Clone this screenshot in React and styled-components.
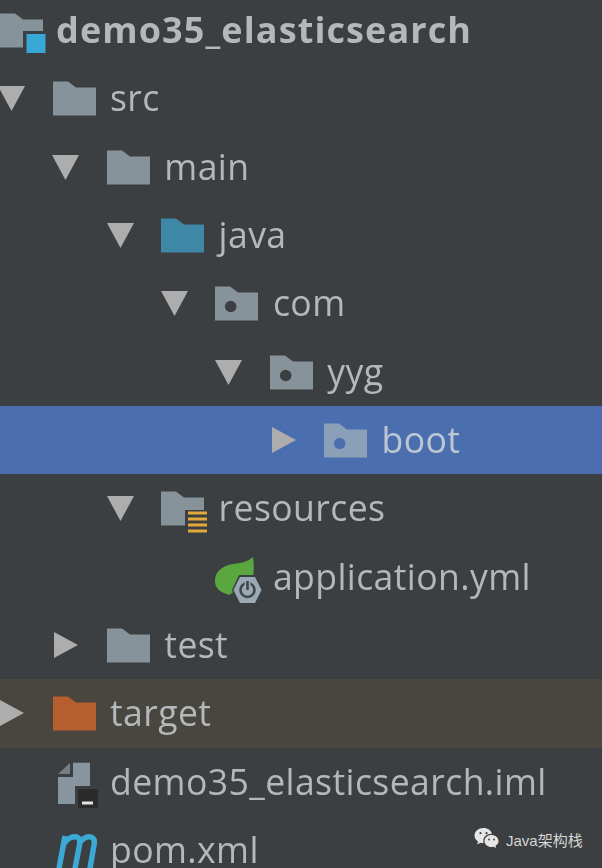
import React from 'react';
import styled, { createGlobalStyle } from 'styled-components';

const GlobalStyle = createGlobalStyle`
  html, body {
    margin: 0;
    padding: 0;
    background: #3c3f41;
  }
`;

const Page = styled.div`
  position: relative;
  width: 602px;
  height: 868px;
  overflow: hidden;
  background: #3c3f41;
`;

const Tree = styled.ul`
  list-style: none;
  margin: -4px 0 0;
  padding: 0;
  filter: blur(0.6px);
`;

const rowColors = {
  selected: '#4b6eaf',
  ignored: '#49453f',
  plain: 'transparent',
};

const Row = styled.li`
  display: flex;
  align-items: center;
  height: 68.33px;
  padding-left: ${(p) => p.$level * 54.3}px;
  background: ${(p) => rowColors[p.$tone || 'plain']};
`;

const ArrowSlot = styled.span`
  flex: none;
  display: flex;
  width: 54.5px;
  margin-left: -2px;
  svg {
    display: block;
  }
`;

const IconSlot = styled.span`
  flex: none;
  display: flex;
  width: 43px;
  height: 44px;
  margin-right: ${(p) => (p.$root ? 13 : 14.5)}px;
  svg {
    display: block;
    overflow: visible;
  }
`;

const Label = styled.span`
  font-family: 'Open Sans', 'Noto Sans', sans-serif;
  font-size: ${(p) => (p.$bold ? 36 : 35.6)}px;
  font-weight: ${(p) => (p.$bold ? 700 : 400)};
  letter-spacing: ${(p) => (p.$bold ? 1.1 : 0.4)}px;
  color: ${(p) => (p.$tone === 'selected' ? '#bcc6d4' : '#b4b8bb')};
  white-space: nowrap;
  line-height: 44px;
  margin-top: ${(p) => (p.$bold ? 0 : -2)}px;
`;

const Watermark = styled.div`
  position: absolute;
  left: 474px;
  top: 827px;
  display: flex;
  align-items: center;
  gap: 7px;
  font-family: 'Liberation Sans', 'Noto Sans CJK SC', sans-serif;
  font-size: 15px;
  color: #d6d6d6;
`;

function Arrow({ open }) {
  return (
    <svg width="27" height="44" viewBox="0 0 27 44">
      {open ? <path d="M0 10H27L13.5 35Z" fill="#adadad" /> : <path d="M2 9L26 22L2 35Z" fill="#adadad" />}
    </svg>
  );
}

function Folder({ color = '#87939a', hole, badge }) {
  return (
    <svg width="43" height="44" viewBox="0 0 43 44">
      <path d="M0 5.5H15L23 11.5H43V39.5H0Z" fill={color} />
      {hole && <circle cx="15.7" cy="25.5" r="5.8" fill={hole} />}
      {badge}
    </svg>
  );
}

function RootBadge() {
  return (
    <>
      <rect x="23" y="23" width="23" height="23" fill="#3c3f41" />
      <rect x="26.5" y="26" width="19" height="19" fill="#38a9d6" />
    </>
  );
}

function ResourceBadge() {
  return (
    <>
      <rect x="24" y="24" width="22" height="23" fill="#3c3f41" />
      <path d="M27 27H46M27 33H46M27 39H46M27 45H46" stroke="#e3a93d" strokeWidth="3.2" />
    </>
  );
}

function SpringIcon() {
  return (
    <svg width="43" height="44" viewBox="0 0 43 44">
      <path d="M38 2C33 6 28 8 22 8.5C10 9.5 0 15 0 26C0 32 4 36 9 38L14 40L38 24C39 16 39 8 38 2Z" fill="#5aa63f" />
      <path d="M24 20H41L48 35L41 50H24L17 35Z" fill="#3c3f41" />
      <path d="M25 22H40L46.5 35L40 48H25L18.5 35Z" fill="#9aa9b3" />
      <circle cx="32.5" cy="35" r="7" fill="none" stroke="#3f4649" strokeWidth="2.6" />
      <path d="M32.5 26V35" stroke="#9aa9b3" strokeWidth="6" />
      <path d="M32.5 26V35" stroke="#3f4649" strokeWidth="2.6" />
    </svg>
  );
}

function ImlIcon() {
  return (
    <svg width="43" height="44" viewBox="0 0 43 44">
      <path d="M20 2.7H37V44H5V17H20Z" fill="#87959e" />
      <path d="M5 14L17 3V14Z" fill="#87959e" opacity="0.75" />
      <rect x="22" y="26" width="26" height="25" fill="#3c3f41" />
      <rect x="25" y="29" width="20" height="19" rx="1" fill="#2b2b2b" />
      <rect x="29" y="41.5" width="11" height="3" fill="#e4e4e4" />
    </svg>
  );
}

function MavenIcon() {
  return (
    <svg width="43" height="44" viewBox="0 0 43 44">
      <path
        d="M5 46L12 8M11 16C14 10 20 8 24 9C27 10 27 13 26.5 17L21 46M26 16C29 10 35 8 38 9C41 10 42 13 41 17L36 46"
        fill="none"
        stroke="#3ba8d6"
        strokeWidth="5.5"
      />
    </svg>
  );
}

function WeChatIcon() {
  return (
    <svg width="25" height="25" viewBox="0 0 25 25">
      <path d="M9.5 1C4.5 1 .5 4.3.5 8.5c0 2.5 1.4 4.6 3.5 6l-.8 3 3.2-1.7c.9.2 1.7.3 2.6.3h.7c-.3-.8-.4-1.5-.4-2.2 0-4 3.6-7.1 8.2-7.1h.5C17.2 3.4 13.7 1 9.5 1Z" fill="#e6e6e6" />
      <path d="M24.5 14c0-3.4-3.3-6-7-6s-7 2.6-7 6 3.3 6 7 6c.8 0 1.5-.1 2.2-.3l2.4 1.4-.6-2.3c1.8-1.1 3-2.8 3-4.8Z" fill="#e6e6e6" />
      <circle cx="6.5" cy="6.2" r="1.1" fill="#3c3f41" />
      <circle cx="12.5" cy="6.2" r="1.1" fill="#3c3f41" />
      <circle cx="15" cy="12.5" r="0.9" fill="#3c3f41" />
      <circle cx="20" cy="12.5" r="0.9" fill="#3c3f41" />
    </svg>
  );
}

const rows = [
  { level: 0, open: true, label: 'src', icon: <Folder /> },
  { level: 1, open: true, label: 'main', icon: <Folder /> },
  { level: 2, open: true, label: 'java', icon: <Folder color="#3f87a6" /> },
  { level: 3, open: true, label: 'com', icon: <Folder hole="#3c3f41" /> },
  { level: 4, open: true, label: 'yyg', icon: <Folder hole="#3c3f41" /> },
  { level: 5, open: false, label: 'boot', tone: 'selected', icon: <Folder color="#8a9fb8" hole="#4b6eaf" /> },
  { level: 2, open: true, label: 'resources', icon: <Folder badge={<ResourceBadge />} /> },
  { level: 3, label: 'application.yml', icon: <SpringIcon /> },
  { level: 1, open: false, label: 'test', icon: <Folder /> },
  { level: 0, open: false, label: 'target', tone: 'ignored', icon: <Folder color="#b45f2d" /> },
  { level: 0, label: 'demo35_elasticsearch.iml', icon: <ImlIcon /> },
  { level: 0, label: 'pom.xml', icon: <MavenIcon /> },
];

export default function App() {
  return (
    <Page>
      <GlobalStyle />
      <Tree>
        <Row $level={0}>
          <IconSlot $root>
            <Folder badge={<RootBadge />} />
          </IconSlot>
          <Label $bold>demo35_elasticsearch</Label>
        </Row>
        {rows.map((row) => (
          <Row key={row.label} $level={row.level} $tone={row.tone}>
            <ArrowSlot>{row.open !== undefined && <Arrow open={row.open} />}</ArrowSlot>
            <IconSlot>{row.icon}</IconSlot>
            <Label $tone={row.tone}>{row.label}</Label>
          </Row>
        ))}
      </Tree>
      <Watermark>
        <WeChatIcon />
        Java架构栈
      </Watermark>
    </Page>
  );
}
